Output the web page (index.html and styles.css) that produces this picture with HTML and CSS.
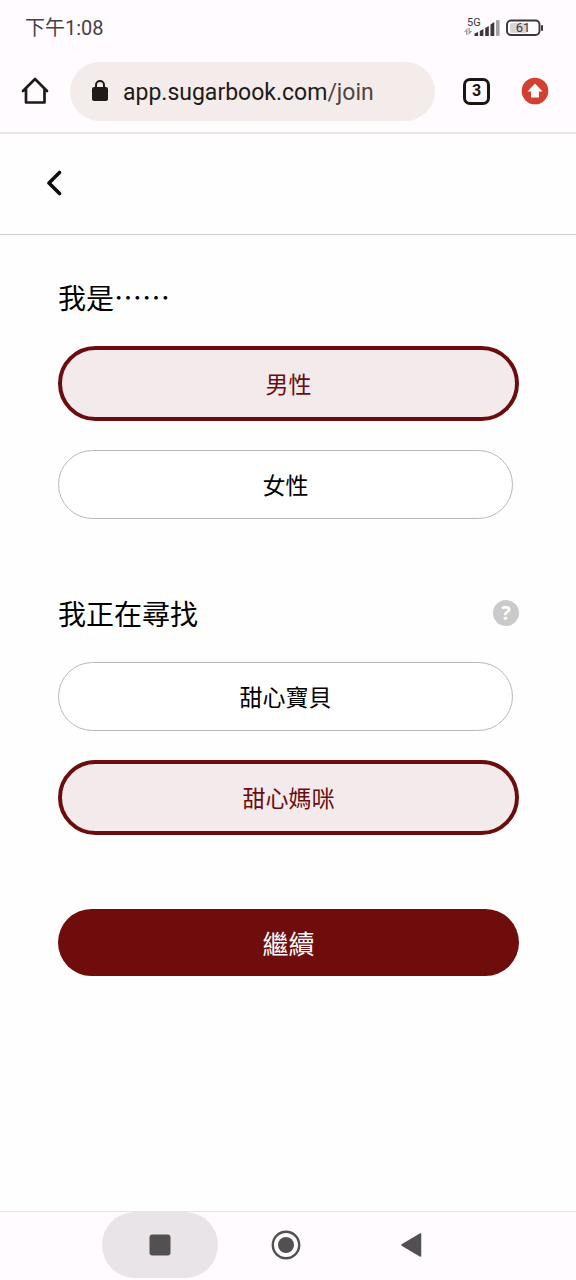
FILE: index.html
```html
<!DOCTYPE html>
<html lang="zh-Hant">
<head>
<meta charset="utf-8">
<meta name="viewport" content="width=device-width, initial-scale=1">
<title>Sugarbook</title>
<link rel="stylesheet" href="styles.css">
</head>
<body>
<div class="status-bar">
  <span class="clock">下午1:08</span>
  <div class="status-icons">
    <svg class="signal" width="36" height="22" viewBox="0 0 36 22" aria-label="5G">
      <text class="signal-label" x="3" y="9">5G</text>
      <g fill="#a5a2a6">
        <path d="M0 15l3.500-4v7H2v-3zM4.500 11H6v3h2.500l-4 4z"/>
        <rect x="32" y="3" width="3.600" height="16" rx="1"/>
      </g>
      <g fill="#39373b">
        <path d="M10.500 16.500l3.600-1.500v4h-3.600zM15.800 14l3.600-2v7h-3.600zM21.200 11l3.600-2v10h-3.600zM26.500 7.500l3.800-2.500v14h-3.800z"/>
      </g>
    </svg>
    <svg class="battery" width="38" height="18" viewBox="0 0 38 18" aria-label="61%">
      <rect x="1" y="1.500" width="32.500" height="14.500" rx="4" fill="none" stroke="#39373b" stroke-width="1.900"/>
      <rect x="4" y="4" width="17" height="10" rx="2" fill="#d8d5d9"/>
      <rect x="35" y="6" width="2" height="6" rx="1" fill="#39373b"/>
      <text class="battery-label" x="17" y="13">61</text>
    </svg>
  </div>
</div>

<header class="browser-bar">
  <button class="icon-button" type="button" aria-label="Home">
    <svg width="28" height="28" viewBox="0 0 28 28" fill="none" stroke="#201a18" stroke-width="2.700" stroke-linejoin="round">
      <path d="M2 14L14 2l12 12M5 12v13.500h18.500V12" stroke-linecap="round"/>
    </svg>
  </button>
  <div class="address">
    <svg width="16" height="22" viewBox="0 0 16 22">
      <path d="M4 9V5a4 4 0 0 1 8 0V9" fill="none" stroke="#201a18" stroke-width="2"/>
      <rect y="7" width="16" height="14" rx="2" fill="#201a18"/>
    </svg>
    <span class="url">app.sugarbook.com<span class="url-path">/join</span></span>
  </div>
  <button class="tabs" type="button" aria-label="Tabs">3</button>
  <button class="icon-button" type="button" aria-label="Update">
    <svg width="28" height="28" viewBox="0 0 28 28">
      <circle cx="14" cy="14" r="13.300" fill="#d33f31"/>
      <path d="M14 6.500l7.500 8H18V20.500h-8V14.500H6.500z" fill="#fff"/>
    </svg>
  </button>
</header>

<div class="page-header">
  <button class="icon-button" type="button" aria-label="返回">
    <svg width="16" height="26" viewBox="0 0 16 26">
      <path d="M13.500 2.500L3 13l10.500 10.500" fill="none" stroke="#0c0c0c" stroke-width="3.600" stroke-linecap="round" stroke-linejoin="round"/>
    </svg>
  </button>
</div>

<main class="form">
  <section class="group">
    <h2 class="question">我是……</h2>
    <button class="option selected" type="button" aria-pressed="true">男性</button>
    <button class="option" type="button" aria-pressed="false">女性</button>
  </section>
  <section class="group">
    <div class="question-row">
      <h2 class="question">我正在尋找</h2>
      <button class="help" type="button" aria-label="說明">?</button>
    </div>
    <button class="option" type="button" aria-pressed="false">甜心寶貝</button>
    <button class="option selected" type="button" aria-pressed="true">甜心媽咪</button>
  </section>
  <button class="submit" type="submit">繼續</button>
</main>

<nav class="system-nav">
  <button class="nav-button active" type="button" aria-label="Recents">
    <svg width="30" height="30" viewBox="0 0 30 30"><rect x="4.500" y="4.500" width="21" height="21" rx="3" fill="#515151"/></svg>
  </button>
  <button class="nav-button" type="button" aria-label="Home">
    <svg width="30" height="30" viewBox="0 0 30 30"><circle cx="15" cy="15" r="13.200" fill="none" stroke="#515151" stroke-width="2.400"/><circle cx="15" cy="15" r="8" fill="#515151"/></svg>
  </button>
  <button class="nav-button" type="button" aria-label="Back">
    <svg width="30" height="30" viewBox="0 0 30 30"><path d="M5 15L23.500 4v22z" fill="#515151" stroke="#515151" stroke-width="1.500" stroke-linejoin="round"/></svg>
  </button>
</nav>
</body>
</html>
```

FILE: styles.css
```css
* {
  box-sizing: border-box;
}

body {
  margin: 0;
  min-height: 100vh;
  display: flex;
  flex-direction: column;
  background: #fefefe;
  color: #000;
  font-family: "Noto Sans CJK TC", sans-serif;
}

button {
  margin: 0;
  padding: 0;
  border: 0;
  background: none;
  color: inherit;
  font: inherit;
  cursor: pointer;
}

svg {
  display: block;
}

.status-bar {
  display: flex;
  justify-content: space-between;
  align-items: center;
  height: 56px;
  padding: 0 32px 0 25px;
  background: #fffbff;
}

.clock {
  color: #444246;
  font: 500 20px/24px Roboto, "Noto Sans CJK TC", sans-serif;
  font-weight: 400;
}

.status-icons {
  display: flex;
  align-items: center;
  gap: 6px;
}

.signal-label {
  font: 11px Roboto, sans-serif;
  fill: #39373b;
}

.battery-label {
  font: 400 13px Roboto, sans-serif;
  text-anchor: middle;
  fill: #39373b;
}

.browser-bar {
  display: flex;
  align-items: center;
  height: 78px;
  padding: 6px 27px 12px 21px;
  background: #fffbff;
  border-bottom: 2px solid #efe2df;
}

.address {
  flex: 1;
  display: flex;
  align-items: center;
  gap: 15px;
  height: 59px;
  margin: 0 28px 0 21px;
  padding: 0 22px;
  border-radius: 30px;
  background: #f4eceb;
}

.url {
  padding-top: 4px;
  color: #201a18;
  font: 23px/28px Roboto, sans-serif;
}

.url-path {
  color: #53433f;
}

.tabs {
  width: 27px;
  height: 27px;
  margin-right: 31px;
  border: 3px solid #1b1614;
  border-radius: 7px;
  color: #1b1614;
  font: 700 16px/20px Roboto, sans-serif;
}

.page-header {
  display: flex;
  align-items: center;
  height: 101px;
  padding: 0 46px 2px;
  border-bottom: 1px solid #d0d0d0;
}

.form {
  flex: 1;
  display: flex;
  flex-direction: column;
  gap: 74px;
  padding: 42px 57px 42px 58px;
}

.group {
  display: flex;
  flex-direction: column;
  gap: 29px;
}

.question-row {
  display: flex;
  justify-content: space-between;
  align-items: center;
}

.question {
  margin: 0;
  font-size: 28px;
  font-weight: 400;
  line-height: 40px;
}

.help {
  width: 26px;
  height: 26px;
  border-radius: 50%;
  background: #cacaca;
  color: #fff;
  font: 700 20px/26px "Open Sans", sans-serif;
}

.option {
  width: calc(100% - 6px);
  height: 69px;
  padding-bottom: 2px;
  border: 1px solid #b8b8b8;
  border-radius: 38px;
  background: #fff;
  font-size: 23px;
  line-height: 34px;
}

.option.selected {
  width: 100%;
  height: 75px;
  border: 4px solid #6b0d0f;
  background: #f3eaeb;
  color: #6b0d0f;
}

.submit {
  height: 67px;
  border-radius: 34px;
  background: #6f0d0d;
  color: #fff;
  font-size: 26px;
  line-height: 38px;
}

.system-nav {
  display: flex;
  justify-content: center;
  gap: 10px;
  height: 69px;
  padding-right: 4px;
  border-top: 1px solid #f0e2de;
  background: #fffbff;
}

.nav-button {
  display: flex;
  justify-content: center;
  align-items: center;
  width: 116px;
  height: 66px;
  border-radius: 34px;
}

.nav-button.active {
  background: #e8e4e8;
}
```
